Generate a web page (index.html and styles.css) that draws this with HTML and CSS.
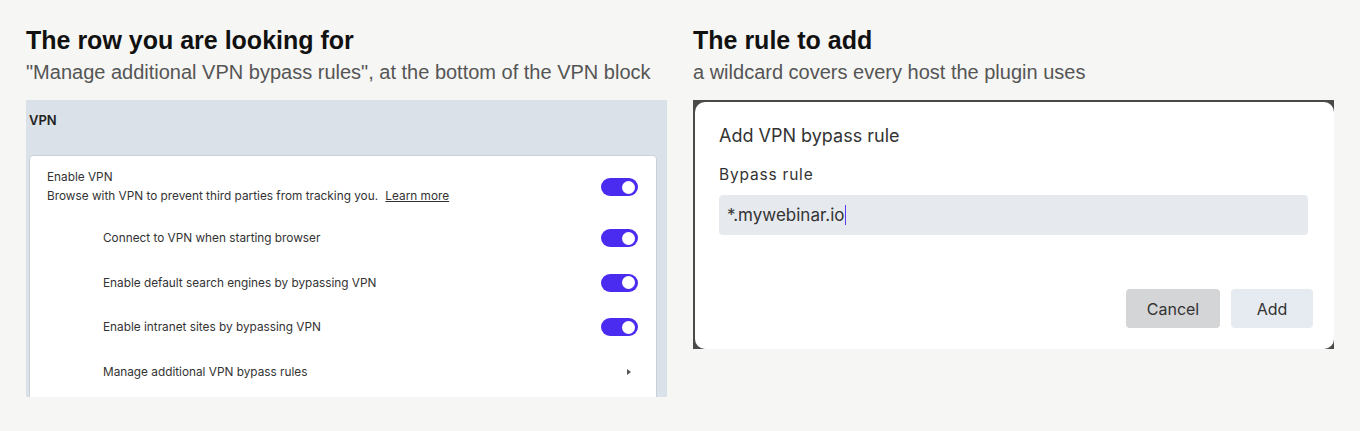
FILE: index.html
```html
<!DOCTYPE html>
<html lang="en">
<head>
<meta charset="utf-8">
<title>VPN bypass rule</title>
<link rel="stylesheet" href="styles.css">
</head>
<body>
<main class="page">
  <section class="col">
    <h2 class="title">The row you are looking for</h2>
    <p class="sub">"Manage additional VPN bypass rules", at the bottom of the VPN block</p>
    <div class="shot settings">
      <div class="sec-label">VPN</div>
      <div class="card">
        <div class="row main-row">
          <div class="row-text">
            <div class="row-title">Enable VPN</div>
            <div class="row-desc">Browse with VPN to prevent third parties from tracking you. <span class="link">Learn more</span></div>
          </div>
          <span class="toggle"><span class="knob"></span></span>
        </div>
        <div class="row sub-row">
          <span class="row-label">Connect to VPN when starting browser</span>
          <span class="toggle"><span class="knob"></span></span>
        </div>
        <div class="row sub-row">
          <span class="row-label">Enable default search engines by bypassing VPN</span>
          <span class="toggle"><span class="knob"></span></span>
        </div>
        <div class="row sub-row">
          <span class="row-label">Enable intranet sites by bypassing VPN</span>
          <span class="toggle"><span class="knob"></span></span>
        </div>
        <div class="row sub-row">
          <span class="row-label">Manage additional VPN bypass rules</span>
          <span class="arrow"></span>
        </div>
      </div>
    </div>
  </section>
  <section class="col">
    <h2 class="title">The rule to add</h2>
    <p class="sub">a wildcard covers every host the plugin uses</p>
    <div class="shot dialog-shot">
      <div class="dialog">
        <div class="dlg-title">Add VPN bypass rule</div>
        <div class="dlg-label">Bypass rule</div>
        <div class="dlg-input"><span class="val">*.mywebinar.io</span><span class="caret"></span></div>
        <div class="dlg-actions">
          <span class="btn btn-cancel">Cancel</span>
          <span class="btn btn-add">Add</span>
        </div>
      </div>
    </div>
  </section>
</main>
</body>
</html>
```

FILE: styles.css
```css
html, body {
  margin: 0;
  padding: 0;
  background: #f6f6f4;
}
.page {
  display: flex;
  gap: 26px;
  padding: 25px 26px 0 26px;
  font-family: "Liberation Sans", Arial, sans-serif;
}
.col {
  width: 641px;
  display: flex;
  flex-direction: column;
}
.title {
  margin: 0;
  font-size: 25px;
  line-height: 31px;
  font-weight: 700;
  color: #111;
}
.sub {
  margin: 3px 0 0 0;
  font-size: 20px;
  line-height: 27px;
  color: #555;
}
.shot {
  margin-top: 14px;
  overflow: hidden;
  font-family: Inter, "Noto Sans", sans-serif;
}
.settings {
  height: 297px;
  background: #dbe1e8;
  padding: 0 10px 0 3px;
  box-sizing: border-box;
}
.sec-label {
  font-size: 13px;
  font-weight: 600;
  color: #222;
  line-height: 20px;
  padding-top: 10px;
  height: 55px;
  box-sizing: border-box;
}
.card {
  background: #fff;
  border: 1px solid #c8d0d9;
  border-radius: 4px;
  padding: 12px 18px 0 17px;
  height: 300px;
  box-sizing: border-box;
}
.row {
  display: flex;
  align-items: center;
  justify-content: space-between;
  color: #333;
  font-size: 11.8px;
}
.main-row {
  height: 38px;
  margin-bottom: 10px;
}
.row-title, .row-desc {
  line-height: 19px;
}
.link {
  text-decoration: underline;
  margin-left: 4px;
}
.sub-row {
  height: 44.5px;
  padding-left: 56px;
}
.toggle {
  width: 37px;
  height: 18px;
  border-radius: 9px;
  background: #4a2cf0;
  display: flex;
  align-items: center;
  justify-content: flex-end;
  padding-right: 3px;
  box-sizing: border-box;
}
.knob {
  width: 13px;
  height: 13px;
  border-radius: 50%;
  background: #fff;
}
.arrow {
  width: 0;
  height: 0;
  border-top: 3.5px solid transparent;
  border-bottom: 3.5px solid transparent;
  border-left: 4px solid #555;
  margin-right: 7px;
}
.dialog-shot {
  height: 249px;
  background: #4a4a4a;
  padding: 2px 0 0 2px;
  box-sizing: border-box;
}
.dialog {
  height: 100%;
  background: #fff;
  border-radius: 10px;
  padding: 24px 21px 21px 24px;
  box-sizing: border-box;
  display: flex;
  flex-direction: column;
  color: #333;
}
.dlg-title {
  font-size: 18px;
  line-height: 20px;
}
.dlg-label {
  margin-top: 19px;
  font-size: 15.5px;
  line-height: 20px;
  letter-spacing: 0.8px;
}
.dlg-input {
  margin-top: 10px;
  margin-right: 5px;
  height: 40px;
  background: #e6eaef;
  border-radius: 4px;
  display: flex;
  align-items: center;
  padding-left: 8px;
  font-size: 17px;
}
.caret {
  width: 1px;
  height: 20px;
  background: #5b3cf5;
  margin-left: 1px;
}
.dlg-actions {
  margin-top: auto;
  display: flex;
  justify-content: flex-end;
  gap: 11px;
}
.btn {
  height: 39px;
  display: flex;
  align-items: center;
  justify-content: center;
  border-radius: 4px;
  font-size: 16px;
  color: #333;
}
.btn-cancel {
  width: 94px;
  background: #d4d5d7;
}
.btn-add {
  width: 82px;
  background: #e6eaf1;
}
```
